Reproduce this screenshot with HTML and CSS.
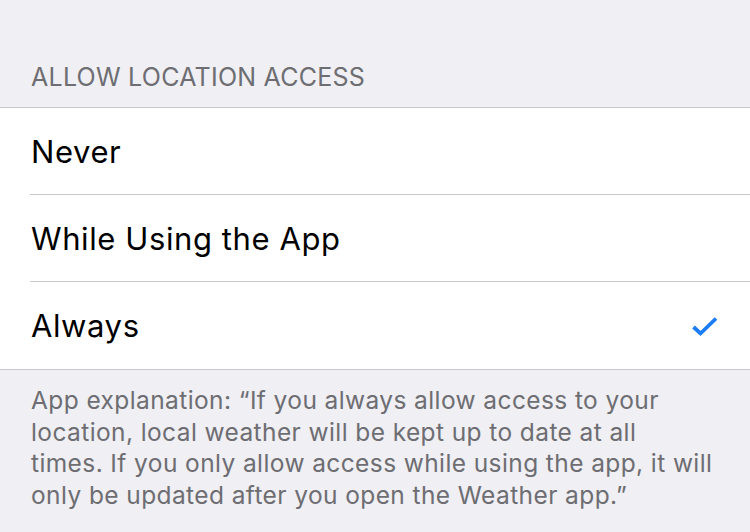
FILE: index.html
```html
<!DOCTYPE html>
<html>
<head>
<meta charset="utf-8">
<link rel="stylesheet" href="styles.css">
</head>
<body>
<div class="screen">
  <div class="section-header">ALLOW LOCATION ACCESS</div>
  <div class="list">
    <div class="row"><span class="label">Never</span></div>
    <div class="row"><span class="label">While Using the App</span></div>
    <div class="row last"><span class="label">Always</span>
      <svg class="check" width="28" height="22" viewBox="0 0 28 22"><polyline points="2.5,12 9.5,18.5 25,3.5" fill="none" stroke="#1b7cf4" stroke-width="3.8" stroke-linecap="butt" stroke-linejoin="miter"/></svg>
    </div>
  </div>
  <div class="footer">App explanation: “If you always allow access to your<br>location, local weather will be kept up to date at all<br>times. If you only allow access while using the app, it will<br>only be updated after you open the Weather app.”</div>
</div>
</body>
</html>
```

FILE: styles.css
```css
html, body {
  margin: 0;
  padding: 0;
  background: #efeff4;
}
.screen {
  width: 750px;
  height: 532px;
  overflow: hidden;
  font-family: Inter, "Liberation Sans", sans-serif;
}
.section-header {
  box-sizing: border-box;
  height: 107px;
  padding: 62px 31px 0;
  font-size: 25px;
  line-height: 30px;
  color: #6d6d72;
  letter-spacing: 0.25px;
}
.list {
  background: #fff;
  border-top: 1px solid #c8c7cc;
  border-bottom: 1px solid #c8c7cc;
}
.row {
  position: relative;
  height: 87px;
  display: flex;
  align-items: center;
  justify-content: space-between;
  padding: 0 30px 0 31px;
}
.row:not(.last)::after {
  content: "";
  position: absolute;
  left: 30px;
  right: 0;
  bottom: 0;
  height: 1px;
  background: #c8c7cc;
}
.label {
  font-size: 31px;
  color: #000;
  letter-spacing: 0.6px;
}
.check {
  display: block;
  margin-right: 1px;
}
.footer {
  padding: 15px 10px 0 31px;
  font-size: 24.5px;
  line-height: 31.7px;
  color: #6d6d72;
  letter-spacing: 0.4px;
  white-space: nowrap;
}
```
